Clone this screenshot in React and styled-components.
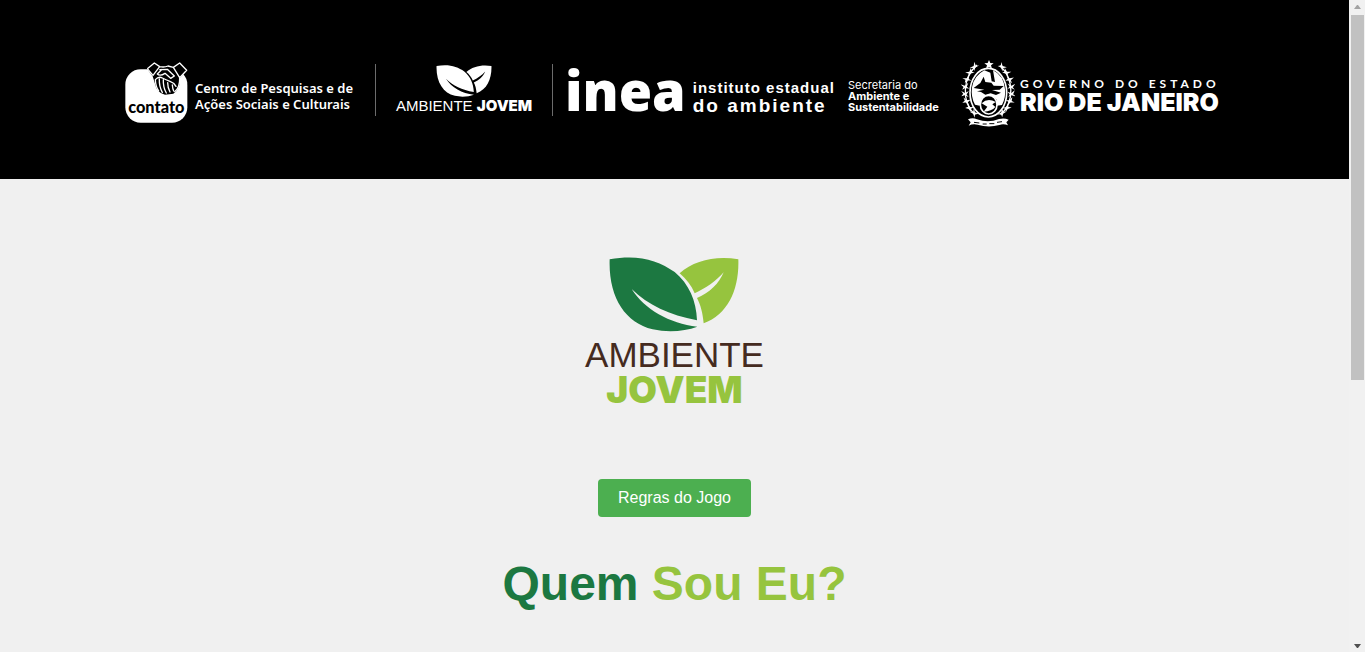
import React from "react";
import styled, { createGlobalStyle } from "styled-components";

const GlobalStyle = createGlobalStyle`
  * { box-sizing: border-box; }
  body {
    margin: 0;
    background: #f0f0f0;
    font-family: "Liberation Sans", Arial, sans-serif;
  }
`;

const Shell = styled.div`
  display: grid;
  grid-template-columns: minmax(0, 1fr) 16px;
  height: 100vh;
  overflow: hidden;
`;

const Page = styled.div`
  min-width: 0;
  overflow: hidden;
`;

const Header = styled.header`
  display: flex;
  justify-content: center;
  align-items: center;
  padding: 56px 20px 48px;
  background: #000;
  color: #fff;
`;

const Brand = styled.div`
  display: flex;
  flex: 0 0 auto;
  align-items: center;
  gap: ${(p) => p.$gap || 0}px;
  width: ${(p) => p.$width}px;
  height: 75px;
  white-space: nowrap;
`;

const StackedBrand = styled(Brand)`
  flex-direction: column;
  justify-content: center;
  padding-bottom: 8px;
`;

const Divider = styled.span`
  flex: 0 0 auto;
  width: 1px;
  height: 52px;
  margin: 0 ${(p) => p.$after}px 8px 19px;
  background: #6c6c6c;
`;

const Lines = styled.div`
  display: flex;
  flex-direction: column;
  padding-top: ${(p) => p.$top || 0}px;
`;

const Line = styled.span`
  font-family: ${(p) => p.$font || '"Noto Sans"'}, sans-serif;
  font-size: ${(p) => p.$size}px;
  line-height: ${(p) => p.$leading}px;
  font-weight: ${(p) => p.$weight || 400};
  letter-spacing: ${(p) => p.$tracking || 0}px;
`;

const Wordmark = styled.span`
  padding-bottom: 8px;
  font-family: "Open Sans", sans-serif;
  font-size: 54px;
  line-height: 56px;
  font-weight: 800;
`;

const Main = styled.main`
  display: flex;
  flex-direction: column;
  align-items: center;
  padding-top: 78px;
`;

const Logo = styled.div`
  display: flex;
  flex-direction: column;
  align-items: center;
  margin-bottom: 72px;
`;

const LogoWord = styled.span`
  font-family: ${(p) => p.$font}, sans-serif;
  font-size: ${(p) => p.$size}px;
  line-height: 35px;
  font-weight: ${(p) => p.$weight};
  color: ${(p) => p.$color};
`;

const LogoWords = styled.div`
  display: flex;
  flex-direction: column;
  align-items: center;
  padding-top: 5px;
`;

const RulesButton = styled.button`
  padding: 10px 20px;
  border: 0;
  border-radius: 4px;
  background: #4caf50;
  color: #fff;
  font: 16px/18px "Liberation Sans", Arial, sans-serif;
  cursor: pointer;
`;

const Title = styled.h1`
  margin: 40px 0 0;
  font-size: 48px;
  line-height: 54px;
  color: #96c43e;
`;

const TitleLead = styled.span`
  color: #1c7841;
`;

const ScrollTrack = styled.div`
  display: flex;
  flex-direction: column;
  align-items: center;
  justify-content: space-between;
  background: #f1f1f1;
`;

const ScrollThumb = styled.div`
  flex: 0 0 56%;
  width: 13px;
  margin-left: 1px;
  background: #c1c1c1;
`;

const ScrollArrow = styled.svg`
  display: block;
  flex: 0 0 15px;
  width: 16px;
  height: 15px;
`;

const ScrollSpace = styled.div`
  flex: 1;
`;

function Leaves({ width, height, dark, light }) {
  return (
    <svg width={width} height={height} viewBox="106 37 388 225" aria-hidden="true">
      <path
        fill={dark}
        d="M107 44C190 28 252 46 302 82C345 118 367 168 369 227C286 211 222 181 173 133C211 194 286 236 370 246C332 260 283 264 236 254C152 234 103 155 107 44Z"
      />
      <path
        fill={light}
        d="M317 86C359 48 425 32 493 44C496 133 463 209 389 236C386 205 380 181 369 160C407 145 435 116 449 83C426 110 395 130 362 146C352 122 337 103 317 86Z"
      />
    </svg>
  );
}

function ContatoMark() {
  return (
    <svg width="63" height="63" viewBox="0 0 189 189" role="img" aria-label="contato">
      <rect x="1" y="22" width="186" height="160" rx="46" fill="#fff" />
      <path
        d="M66 20L88 2L105 14L126 12L143 16L164 2L186 25L164 49Q168 80 145 95L120 98Q95 92 90 65L83 43Z"
        fill="#000"
      />
      <path
        d="M67 20L88 3L104 14L84 40L67 20M145 16L164 3L185 25L164 47L145 16M104 14Q118 17 129 12L145 16M103 23L127 22L148 42L137 49L120 34Q105 44 97 36L111 22M164 47Q165 78 148 90"
        fill="none"
        stroke="#fff"
        strokeWidth="4"
        strokeLinejoin="round"
      />
      <path
        d="M91 53Q92 74 101 87M103 51Q102 73 112 91M115 53Q114 75 124 93M128 62Q128 77 135 90M142 69Q143 81 146 87M91 53Q101 42 112 48T135 58T153 73"
        fill="none"
        stroke="#fff"
        strokeWidth="4"
        strokeLinecap="round"
      />
      <text
        x="94"
        y="154"
        textAnchor="middle"
        fontFamily="Lato, sans-serif"
        fontWeight="900"
        fontSize="49"
        fill="#000"
      >
        contato
      </text>
    </svg>
  );
}

function Crest() {
  const sprigs = [
    [38, 18, -48], [25, 35, -35], [17, 55, -20], [12, 77, -8],
    [12, 99, 5], [17, 121, 20], [27, 141, 36], [42, 157, 52],
  ];
  return (
    <svg width="54" height="68" viewBox="0 0 162 204" aria-hidden="true">
      <g fill="none" stroke="#fff" strokeWidth="4">
        <path d="M48 15C5 52 0 126 42 164" />
        <path d="M117 17C158 54 162 126 119 164" />
      </g>
      {sprigs.map(([x, y, a]) => (
        <g key={y} fill="#fff">
          <path d="M-12-5L0 0L11-7L5 4L12 11L0 7L-10 11L-5 3Z" transform={`translate(${x} ${y}) rotate(${a})`} />
          <path d="M-12-5L0 0L11-7L5 4L12 11L0 7L-10 11L-5 3Z" transform={`translate(${163 - x} ${y}) rotate(${-a})`} />
        </g>
      ))}
      <path fill="#fff" d="M84 0L88 9L98 10L90 16L93 26L84 21L75 26L78 16L70 10L80 9Z" />
      <ellipse cx="82" cy="98" rx="55" ry="73" fill="#000" stroke="#fff" strokeWidth="5" />
      <path
        fill="#fff"
        d="M96 31Q128 46 132 88Q135 111 123 135L107 137L107 119Q95 105 80 112L62 116L56 137L42 134Q29 111 33 82Q38 48 70 31L88 38L92 64L102 66Z"
      />
      <path
        fill="#000"
        d="M38 84L58 69L68 50L73 66L91 68L98 77L128 78L116 89L93 90L120 98L105 105L89 100L73 104L60 96L48 94L70 89Z"
      />
      <ellipse cx="83" cy="134" rx="25" ry="28" fill="#000" stroke="#fff" strokeWidth="5" />
      <path fill="#fff" d="M62 130Q80 112 104 126L94 133L103 141Q92 154 68 155L79 140Z" />
      <path
        fill="#fff"
        d="M21 178Q35 172 48 178Q82 190 114 177Q130 173 143 179L136 187L141 196Q127 190 115 195Q82 204 50 194Q36 190 23 197L29 187Z"
      />
      <path d="M39 187L55 189M65 192H77M85 191H100M108 187L123 185" stroke="#000" strokeWidth="3" />
    </svg>
  );
}

function ScrollBar() {
  return (
    <ScrollTrack aria-hidden="true">
      <ScrollArrow viewBox="0 0 16 15">
        <path d="M5 9H12L9 5H8Z" fill="#a3a3a3" />
      </ScrollArrow>
      <ScrollThumb />
      <ScrollSpace />
      <ScrollArrow viewBox="0 0 16 15">
        <path d="M5 7H12L9 11H8Z" fill="#505050" />
      </ScrollArrow>
    </ScrollTrack>
  );
}

export default function App() {
  return (
    <>
      <GlobalStyle />
      <Shell>
        <Page>
          <Header>
            <Brand $width={231} $gap={7}>
              <ContatoMark />
              <Lines $top={4}>
                <Line $size={13} $leading={16} $weight={600}>Centro de Pesquisas e de</Line>
                <Line $size={13} $leading={16} $weight={600}>Ações Sociais e Culturais</Line>
              </Lines>
            </Brand>
            <Divider $after={19} />
            <StackedBrand $width={138}>
              <Leaves width={56} height={32} dark="#fff" light="#fff" />
              <div>
                <Line $font="Liberation Sans" $size={15} $leading={18}>AMBIENTE </Line>
                <Line $font="Inter" $size={15} $leading={18} $weight={900}>JOVEM</Line>
              </div>
            </StackedBrand>
            <Divider $after={12} />
            <Brand $width={283} $gap={7}>
              <Wordmark>inea</Wordmark>
              <Lines $top={6}>
                <Line $font="Liberation Sans" $size={15} $leading={18} $weight={700} $tracking={1}>instituto estadual</Line>
                <Line $font="Liberation Sans" $size={19} $leading={18} $weight={700} $tracking={2}>do ambiente</Line>
              </Lines>
            </Brand>
            <Brand $width={113}>
              <Lines $top={6}>
                <Line $font="Inter" $size={11} $leading={11}>Secretaria do</Line>
                <Line $font="Inter" $size={11} $leading={11} $weight={700}>Ambiente e</Line>
                <Line $font="Inter" $size={11} $leading={11} $weight={700}>Sustentabilidade</Line>
              </Lines>
            </Brand>
            <Brand $width={263} $gap={5}>
              <Crest />
              <Lines>
                <Line $font="Lato" $size={12} $leading={17} $weight={700} $tracking={4}>GOVERNO DO ESTADO</Line>
                <Line $font="Inter" $size={25} $leading={20} $weight={900}>RIO DE JANEIRO</Line>
              </Lines>
            </Brand>
          </Header>
          <Main>
            <Logo role="img" aria-label="Ambiente Jovem">
              <Leaves width={130} height={75} dark="#1c7841" light="#96c43e" />
              <LogoWords>
                <LogoWord $font="Liberation Sans" $size={35} $weight={400} $color="#452b1f">AMBIENTE</LogoWord>
                <LogoWord $font="Inter" $size={37} $weight={900} $color="#96c43e">JOVEM</LogoWord>
              </LogoWords>
            </Logo>
            <RulesButton type="button">Regras do Jogo</RulesButton>
            <Title>
              <TitleLead>Quem</TitleLead> Sou Eu?
            </Title>
          </Main>
        </Page>
        <ScrollBar />
      </Shell>
    </>
  );
}
